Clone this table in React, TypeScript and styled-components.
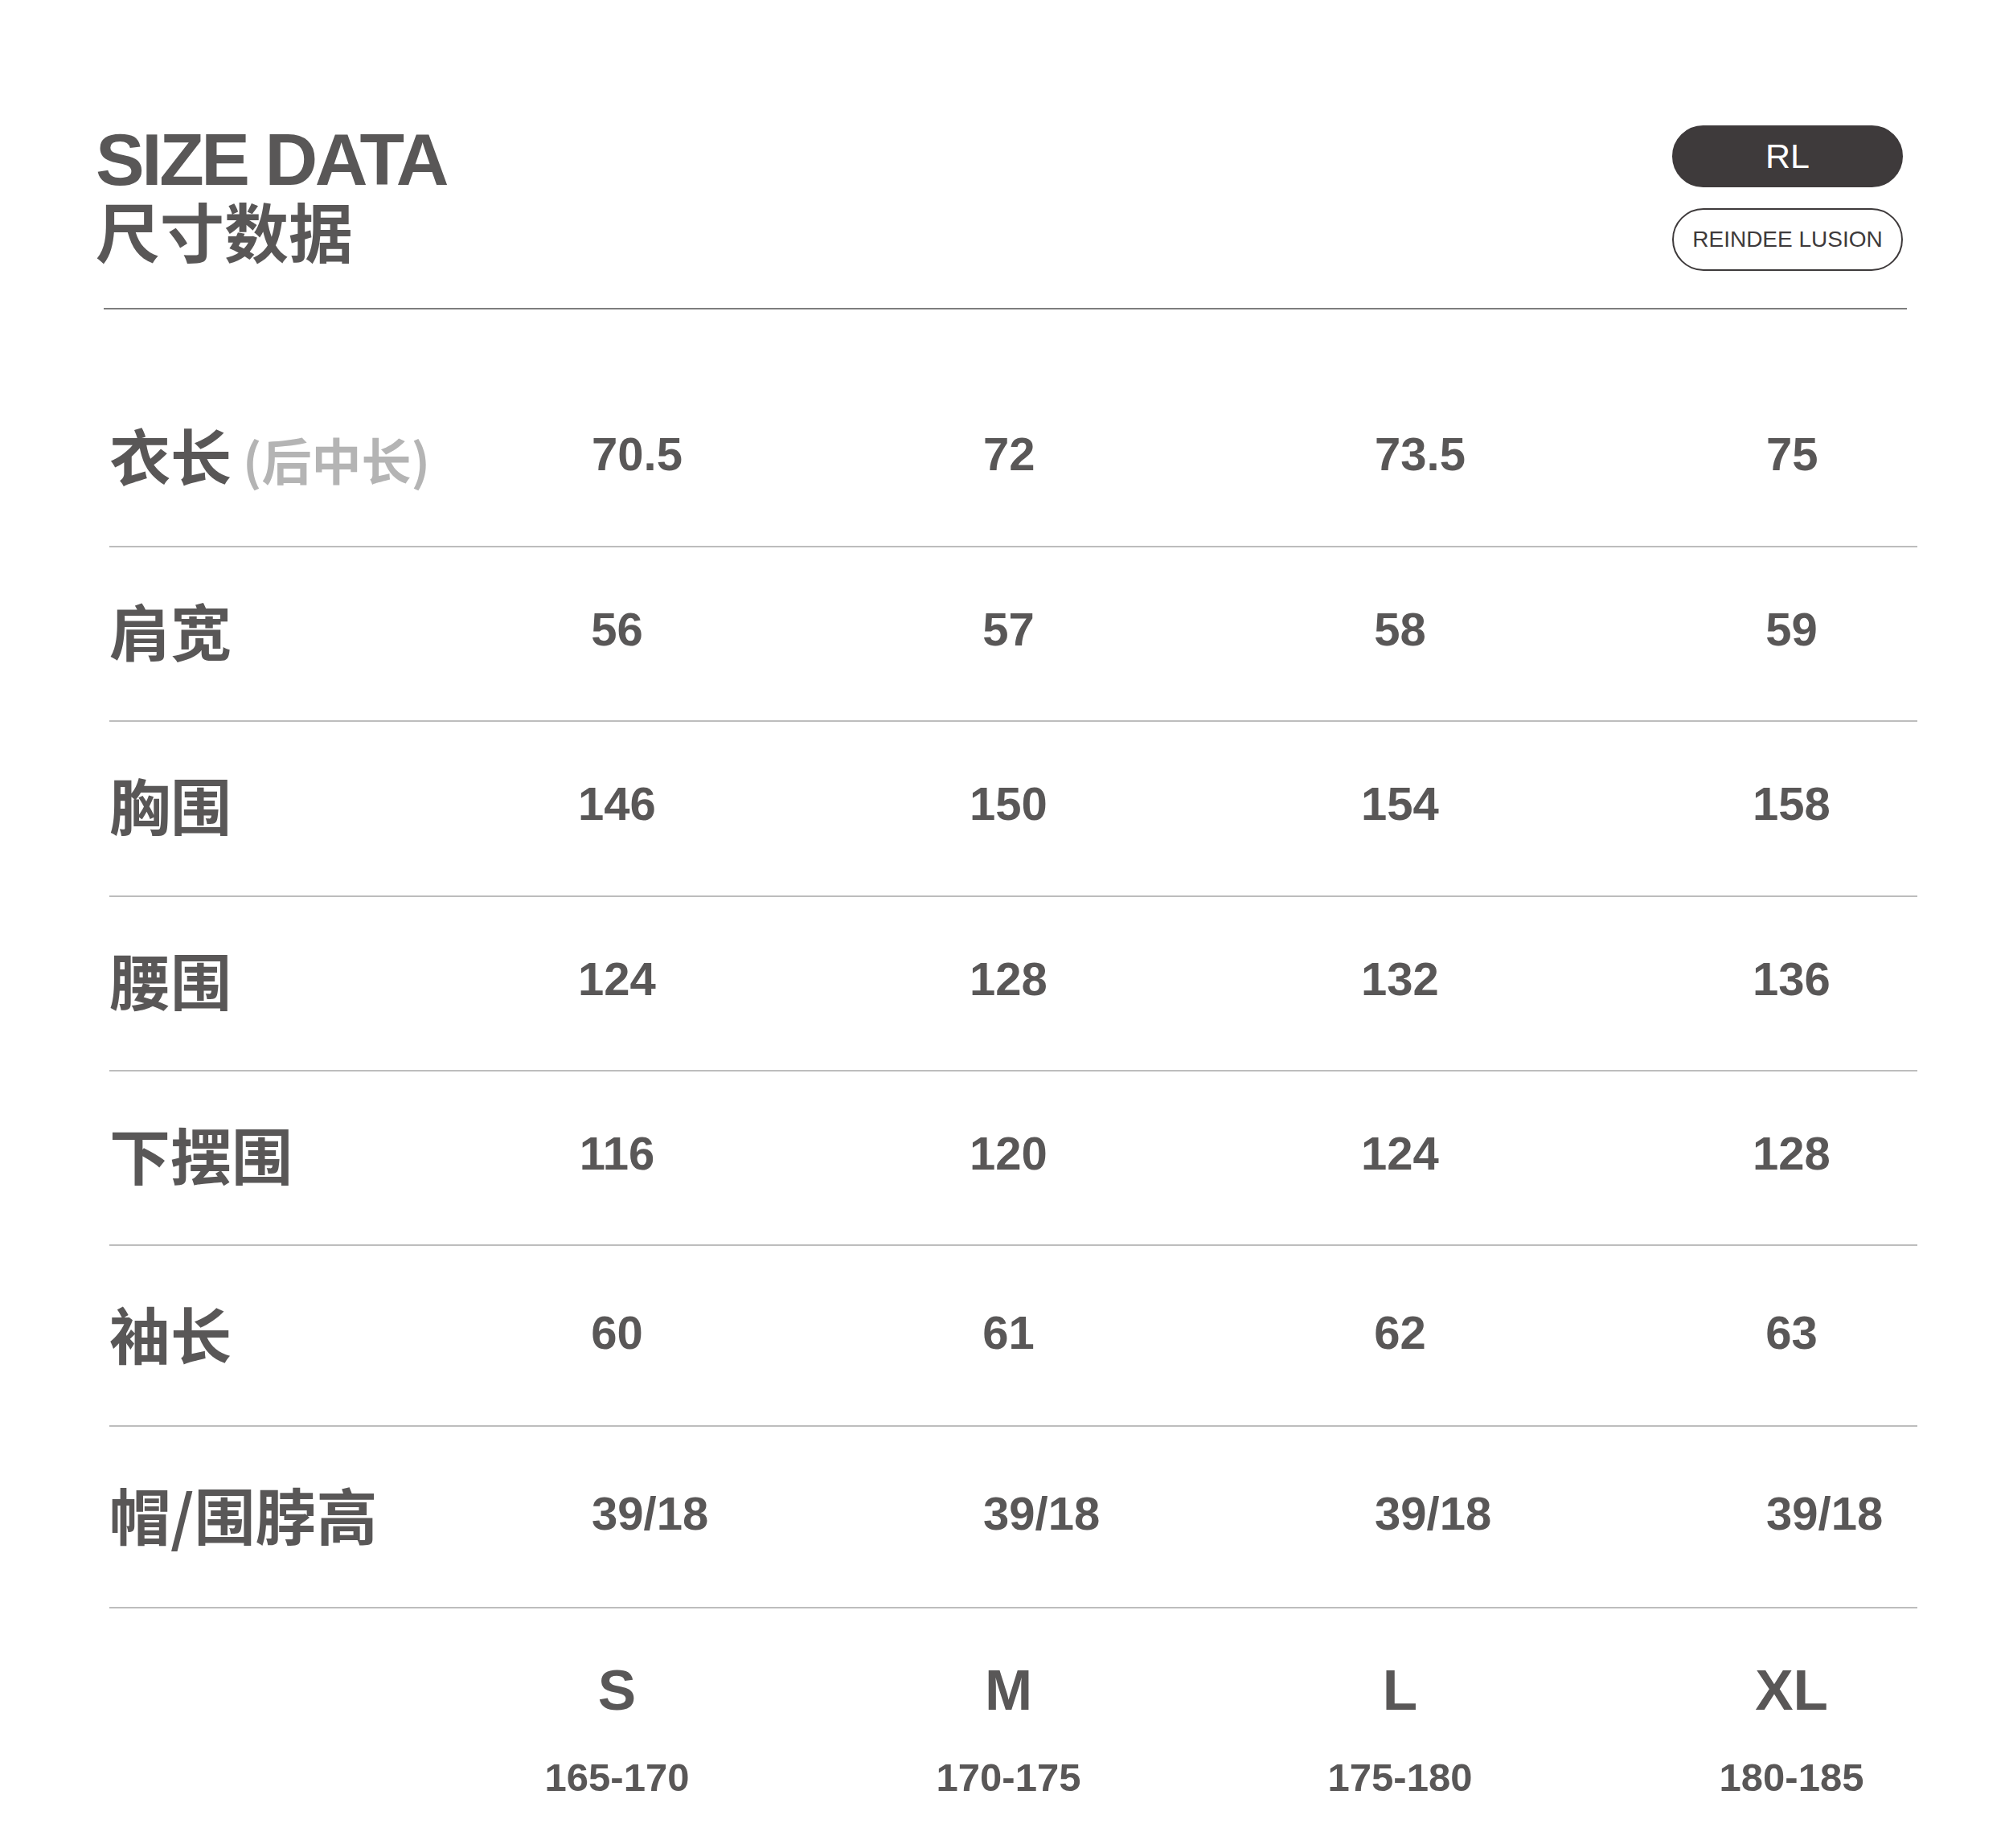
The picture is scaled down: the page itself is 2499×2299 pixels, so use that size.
import styled, { createGlobalStyle } from 'styled-components';

const GlobalStyle = createGlobalStyle`
  html, body {
    margin: 0;
    padding: 0;
    background: #ffffff;
  }
  body {
    font-family: 'Liberation Sans', Arial, sans-serif;
    color: #595757;
  }
`;

const Page = styled.div`
  width: 2499px;
  min-height: 2299px;
  padding-top: 153px;
  box-sizing: border-box;
  background: #ffffff;
`;

const Header = styled.header`
  display: flex;
  justify-content: space-between;
  align-items: flex-start;
  width: 2248px;
  margin-left: 119px;
`;

const TitleBlock = styled.div`
  display: flex;
  flex-direction: column;
`;

const TitleEn = styled.h1`
  margin: 0;
  font: 700 91px/1 'Liberation Sans', Arial, sans-serif;
  letter-spacing: -3.4px;
  color: #595757;
`;

const TitleCn = styled.div`
  margin-top: 1px;
  font: 700 80px/1 'Noto Sans CJK SC', sans-serif;
  color: #595757;
`;

const Brand = styled.div`
  display: flex;
  flex-direction: column;
  gap: 26px;
  margin-top: 3px;
`;

const Pill = styled.div<{ $dark?: boolean }>`
  display: flex;
  align-items: center;
  justify-content: center;
  width: 287px;
  height: ${(p) => (p.$dark ? 77 : 78)}px;
  box-sizing: border-box;
  border-radius: 40px;
  border: 2px solid #3e3a3b;
  background: ${(p) => (p.$dark ? '#3e3a3b' : '#ffffff')};
  color: ${(p) => (p.$dark ? '#ffffff' : '#3e3a3b')};
  font: 400 ${(p) => (p.$dark ? 43 : 28)}px/1 'Liberation Sans', Arial, sans-serif;
`;

const Divider = styled.hr`
  margin: 46px 0 0 129px;
  width: 2243px;
  height: 2px;
  border: 0;
  background: #7d7d7d;
`;

const Table = styled.div`
  margin: 78px 0 0 136px;
  width: 2249px;
`;

const Row = styled.div<{ $h: number }>`
  display: grid;
  grid-template-columns: 388px repeat(4, 487px);
  align-items: center;
  height: ${(p) => p.$h}px;
  box-sizing: border-box;
  padding-bottom: ${(p) => (p.$h > 220 ? 8 : 12)}px;
  border-bottom: 2px solid #bdbdbd;
`;

const Label = styled.div`
  font: 700 76px/1 'Noto Sans CJK SC', sans-serif;
  color: #595757;
  white-space: nowrap;
`;

const Note = styled.span`
  margin-left: 14px;
  font-size: 62px;
  color: #b4b4b4;
`;

const Value = styled.div<{ $align: 'center' | 'start' }>`
  font: 700 58px/1 'Liberation Sans', Arial, sans-serif;
  color: #595757;
  white-space: nowrap;
  text-align: ${(p) => p.$align};
  padding-left: ${(p) => (p.$align === 'start' ? 212 : 0)}px;
`;

const Footer = styled.div`
  display: grid;
  grid-template-columns: 388px repeat(4, 487px);
  margin-top: 66px;
`;

const SizeCell = styled.div`
  display: flex;
  flex-direction: column;
  align-items: center;
`;

const SizeName = styled.div`
  font: 700 71px/1 'Liberation Sans', Arial, sans-serif;
  color: #595757;
`;

const SizeRange = styled.div`
  margin-top: 49px;
  font: 700 49px/1 'Liberation Sans', Arial, sans-serif;
  color: #595757;
`;

interface IRow {
  label: string;
  note?: string;
  values: string[];
  align?: 'center' | 'start';
  h: number;
}

const rows: IRow[] = [
  { label: '衣长', note: '(后中长)', values: ['70.5', '72', '73.5', '75'], align: 'start', h: 218 },
  { label: '肩宽', values: ['56', '57', '58', '59'], h: 217 },
  { label: '胸围', values: ['146', '150', '154', '158'], h: 218 },
  { label: '腰围', values: ['124', '128', '132', '136'], h: 217 },
  { label: '下摆围', values: ['116', '120', '124', '128'], h: 217 },
  { label: '袖长', values: ['60', '61', '62', '63'], h: 225 },
  { label: '帽/围脖高', values: ['39/18', '39/18', '39/18', '39/18'], align: 'start', h: 226 },
];

const sizes = [
  { name: 'S', range: '165-170' },
  { name: 'M', range: '170-175' },
  { name: 'L', range: '175-180' },
  { name: 'XL', range: '180-185' },
];

function App() {
  return (
    <Page>
      <GlobalStyle />
      <Header>
        <TitleBlock>
          <TitleEn>SIZE DATA</TitleEn>
          <TitleCn>尺寸数据</TitleCn>
        </TitleBlock>
        <Brand>
          <Pill $dark>RL</Pill>
          <Pill>REINDEE LUSION</Pill>
        </Brand>
      </Header>
      <Divider />
      <Table>
        {rows.map((row) => (
          <Row key={row.label} $h={row.h}>
            <Label>
              {row.label}
              {row.note && <Note>{row.note}</Note>}
            </Label>
            {row.values.map((v, i) => (
              <Value key={i} $align={row.align ?? 'center'}>
                {v}
              </Value>
            ))}
          </Row>
        ))}
        <Footer>
          <div />
          {sizes.map((s) => (
            <SizeCell key={s.name}>
              <SizeName>{s.name}</SizeName>
              <SizeRange>{s.range}</SizeRange>
            </SizeCell>
          ))}
        </Footer>
      </Table>
    </Page>
  );
}

export default App;
